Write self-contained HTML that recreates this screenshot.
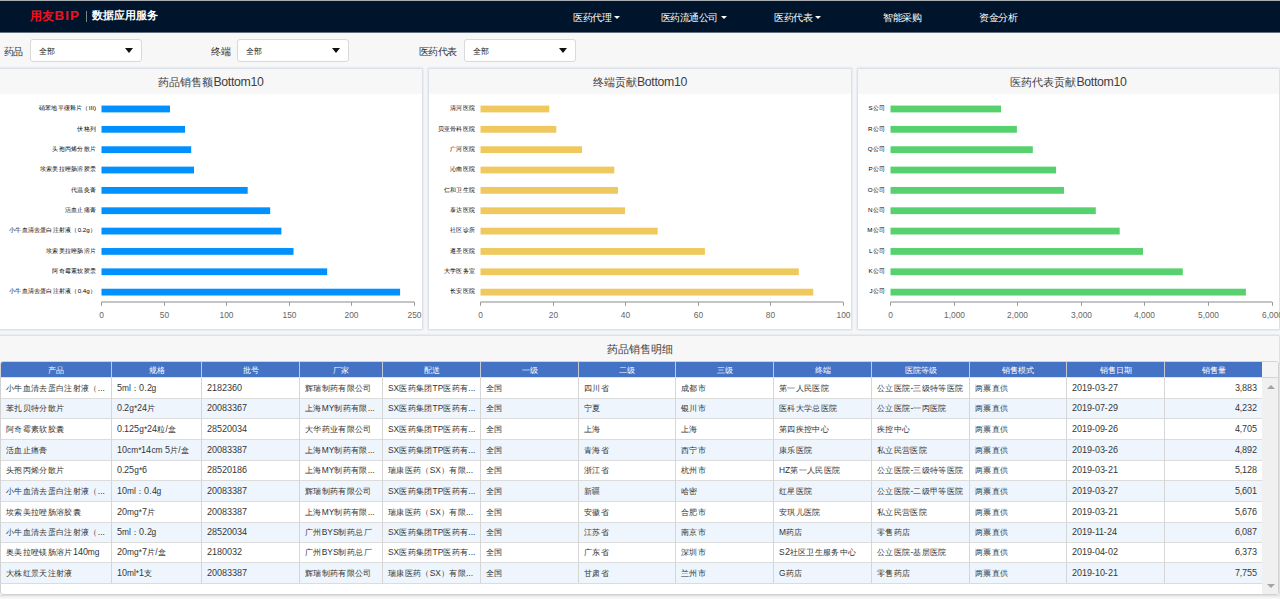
<!DOCTYPE html>
<html><head><meta charset="utf-8"><style>
@font-face{font-family:"LSx";src:local("Liberation Sans");size-adjust:107%;unicode-range:U+0030-0039}
*{margin:0;padding:0;box-sizing:border-box}
html,body{width:1280px;height:599px;overflow:hidden;background:#f7f7f7;font-family:"Liberation Sans",sans-serif;color:#333}
.top{position:absolute;left:0;top:0;width:1280px;height:32px;background:#00152b;border-top:1px solid #a8acb0}
.logo{position:absolute;left:30px;top:5px;height:20px;line-height:20px;color:#f0101e;font-size:12.4px;font-weight:bold;letter-spacing:0;white-space:nowrap} .logo b{font-size:13.3px;letter-spacing:1.1px;margin-left:0.5px}
.sep{position:absolute;left:86px;top:10px;width:1px;height:11px;background:#7d828c}
.app{position:absolute;left:91.5px;top:6.6px;color:#fff;font-size:11.2px;font-weight:bold}
.nav{position:absolute;top:9.7px;color:#fff;font-size:10px;letter-spacing:-0.43px;white-space:nowrap}
.caret{display:inline-block;width:0;height:0;border-left:3px solid transparent;border-right:3px solid transparent;border-top:3px solid #fff;vertical-align:middle;margin-left:3px;margin-top:-2px}
.flab{position:absolute;top:45.3px;font-size:10px;letter-spacing:-0.43px;color:#333}
.sel{position:absolute;top:39px;width:111.5px;height:22.5px;background:#fff;border:1px solid #d9d9d9;border-radius:3px}
.sel span{position:absolute;left:8px;top:5.5px;font-size:8.4px;color:#222}
.sel i{position:absolute;right:8px;top:8px;width:0;height:0;border-left:4px solid transparent;border-right:4px solid transparent;border-top:5.5px solid #111}
.panel{position:absolute;background:#fff;box-shadow:0 0 2px 1px #cdd6e3}
.ptitle{position:absolute;left:0;top:0;width:100%;height:26px;background:#f7f7f7;text-align:center;font-size:11.3px;line-height:28px;color:#404040}
.bt{font-size:12.3px;letter-spacing:-0.3px}
.yl{position:absolute;width:200px;height:10px;line-height:10px;text-align:right;font-size:7px;color:#000;white-space:nowrap;transform:scale(0.89);transform-origin:100% 50%}
.xl{font-size:8.4px;fill:#666}
.th{position:absolute;color:#fff;font-size:8.4px;text-align:center}
.c{letter-spacing:0.35px}
.td{position:absolute;font-family:"LSx","Liberation Sans",sans-serif;font-size:8.4px;color:#333;white-space:nowrap;overflow:hidden}
</style></head><body>
<div style="position:absolute;left:0;top:32px;width:1280px;height:1px;background:#626f7c"></div>
<div class="top">
 <div class="logo">用友<b>BIP</b></div><div class="sep"></div><div class="app">数据应用服务</div>
 <div class="nav" style="left:573px">医药代理<i class="caret"></i></div>
 <div class="nav" style="left:660.5px">医药流通公司<i class="caret"></i></div>
 <div class="nav" style="left:774px">医药代表<i class="caret"></i></div>
 <div class="nav" style="left:883px">智能采购</div>
 <div class="nav" style="left:979px">资金分析</div>
</div>
<div class="flab" style="left:3.5px">药品</div><div class="sel" style="left:30px"><span>全部</span><i></i></div>
<div class="flab" style="left:211px">终端</div><div class="sel" style="left:237px;width:112px"><span>全部</span><i></i></div>
<div class="flab" style="left:418.5px">医药代表</div><div class="sel" style="left:464px"><span>全部</span><i></i></div>
<div class="panel" style="left:0px;top:69px;width:422px;height:260px"><div class="ptitle" style="height:25px;line-height:26px">药品销售额<span class="bt">Bottom10</span></div><div class="pbody"></div><svg width="422" height="235" style="position:absolute;left:0;top:25px;overflow:visible"><rect x="101.5" y="11.58" width="68.50" height="6.8" fill="#0091ff"/><rect x="101.5" y="31.93" width="83.50" height="6.8" fill="#0091ff"/><rect x="101.5" y="52.28" width="89.70" height="6.8" fill="#0091ff"/><rect x="101.5" y="72.63" width="92.50" height="6.8" fill="#0091ff"/><rect x="101.5" y="92.97" width="146.20" height="6.8" fill="#0091ff"/><rect x="101.5" y="113.33" width="168.70" height="6.8" fill="#0091ff"/><rect x="101.5" y="133.68" width="179.90" height="6.8" fill="#0091ff"/><rect x="101.5" y="154.03" width="192.00" height="6.8" fill="#0091ff"/><rect x="101.5" y="174.38" width="225.70" height="6.8" fill="#0091ff"/><rect x="101.5" y="194.73" width="298.60" height="6.8" fill="#0091ff"/><path d="M101.5 208H414.3" stroke="#8c8c8c" stroke-width="1.2" fill="none"/><path d="M101.50 208v3.8" stroke="#999" stroke-width="1" fill="none"/><text x="101.50" y="223.5" text-anchor="middle" class="xl">0</text><path d="M164.50 208v3.8" stroke="#999" stroke-width="1" fill="none"/><text x="164.50" y="223.5" text-anchor="middle" class="xl">50</text><path d="M226.50 208v3.8" stroke="#999" stroke-width="1" fill="none"/><text x="226.50" y="223.5" text-anchor="middle" class="xl">100</text><path d="M289.50 208v3.8" stroke="#999" stroke-width="1" fill="none"/><text x="289.50" y="223.5" text-anchor="middle" class="xl">150</text><path d="M351.50 208v3.8" stroke="#999" stroke-width="1" fill="none"/><text x="351.50" y="223.5" text-anchor="middle" class="xl">200</text><path d="M414.50 208v3.8" stroke="#999" stroke-width="1" fill="none"/><text x="414.50" y="223.5" text-anchor="middle" class="xl">250</text></svg><div class="yl" style="left:-104.00px;top:34.27px">硝苯地平缓释片（III)</div><div class="yl" style="left:-104.00px;top:54.63px">伏格列</div><div class="yl" style="left:-104.00px;top:74.97px">头孢丙烯分散片</div><div class="yl" style="left:-104.00px;top:95.33px">埃索美拉唑肠溶胶囊</div><div class="yl" style="left:-104.00px;top:115.67px">代温灸膏</div><div class="yl" style="left:-104.00px;top:136.03px">活血止痛膏</div><div class="yl" style="left:-104.00px;top:156.38px">小牛血清去蛋白注射液（0.2g）</div><div class="yl" style="left:-104.00px;top:176.72px">埃索美拉唑肠溶片</div><div class="yl" style="left:-104.00px;top:197.08px">阿奇霉素软胶囊</div><div class="yl" style="left:-104.00px;top:217.43px">小牛血清去蛋白注射液（0.4g）</div></div><div class="panel" style="left:429px;top:69px;width:422px;height:260px"><div class="ptitle" style="height:25px;line-height:26px">终端贡献<span class="bt">Bottom10</span></div><div class="pbody"></div><svg width="422" height="235" style="position:absolute;left:0;top:25px;overflow:visible"><rect x="51.5" y="11.58" width="68.80" height="6.8" fill="#efc95e"/><rect x="51.5" y="31.93" width="75.80" height="6.8" fill="#efc95e"/><rect x="51.5" y="52.28" width="101.50" height="6.8" fill="#efc95e"/><rect x="51.5" y="72.63" width="133.80" height="6.8" fill="#efc95e"/><rect x="51.5" y="92.97" width="137.50" height="6.8" fill="#efc95e"/><rect x="51.5" y="113.33" width="144.50" height="6.8" fill="#efc95e"/><rect x="51.5" y="133.68" width="177.20" height="6.8" fill="#efc95e"/><rect x="51.5" y="154.03" width="224.40" height="6.8" fill="#efc95e"/><rect x="51.5" y="174.38" width="318.30" height="6.8" fill="#efc95e"/><rect x="51.5" y="194.73" width="332.80" height="6.8" fill="#efc95e"/><path d="M51.5 208H414" stroke="#8c8c8c" stroke-width="1.2" fill="none"/><path d="M51.50 208v3.8" stroke="#999" stroke-width="1" fill="none"/><text x="51.50" y="223.5" text-anchor="middle" class="xl">0</text><path d="M124.50 208v3.8" stroke="#999" stroke-width="1" fill="none"/><text x="124.50" y="223.5" text-anchor="middle" class="xl">20</text><path d="M196.50 208v3.8" stroke="#999" stroke-width="1" fill="none"/><text x="196.50" y="223.5" text-anchor="middle" class="xl">40</text><path d="M269.50 208v3.8" stroke="#999" stroke-width="1" fill="none"/><text x="269.50" y="223.5" text-anchor="middle" class="xl">60</text><path d="M341.50 208v3.8" stroke="#999" stroke-width="1" fill="none"/><text x="341.50" y="223.5" text-anchor="middle" class="xl">80</text><path d="M414.50 208v3.8" stroke="#999" stroke-width="1" fill="none"/><text x="414.50" y="223.5" text-anchor="middle" class="xl">100</text></svg><div class="yl" style="left:-154.00px;top:34.27px">清河医院</div><div class="yl" style="left:-154.00px;top:54.63px">贝亚骨科医院</div><div class="yl" style="left:-154.00px;top:74.97px">广河医院</div><div class="yl" style="left:-154.00px;top:95.33px">沁南医院</div><div class="yl" style="left:-154.00px;top:115.67px">仁和卫生院</div><div class="yl" style="left:-154.00px;top:136.03px">泰达医院</div><div class="yl" style="left:-154.00px;top:156.38px">社区诊所</div><div class="yl" style="left:-154.00px;top:176.72px">遵圣医院</div><div class="yl" style="left:-154.00px;top:197.08px">大学医务室</div><div class="yl" style="left:-154.00px;top:217.43px">长安医院</div></div><div class="panel" style="left:858px;top:69px;width:421px;height:260px"><div class="ptitle" style="height:25px;line-height:26px">医药代表贡献<span class="bt">Bottom10</span></div><div class="pbody"></div><svg width="422" height="235" style="position:absolute;left:0;top:25px;overflow:visible"><rect x="32.5" y="11.58" width="110.50" height="6.8" fill="#57d06e"/><rect x="32.5" y="31.93" width="126.40" height="6.8" fill="#57d06e"/><rect x="32.5" y="52.28" width="142.30" height="6.8" fill="#57d06e"/><rect x="32.5" y="72.63" width="165.60" height="6.8" fill="#57d06e"/><rect x="32.5" y="92.97" width="173.50" height="6.8" fill="#57d06e"/><rect x="32.5" y="113.33" width="205.30" height="6.8" fill="#57d06e"/><rect x="32.5" y="133.68" width="229.20" height="6.8" fill="#57d06e"/><rect x="32.5" y="154.03" width="252.50" height="6.8" fill="#57d06e"/><rect x="32.5" y="174.38" width="292.30" height="6.8" fill="#57d06e"/><rect x="32.5" y="194.73" width="355.40" height="6.8" fill="#57d06e"/><path d="M32.5 208H414" stroke="#8c8c8c" stroke-width="1.2" fill="none"/><path d="M32.50 208v3.8" stroke="#999" stroke-width="1" fill="none"/><text x="32.50" y="223.5" text-anchor="middle" class="xl">0</text><path d="M96.50 208v3.8" stroke="#999" stroke-width="1" fill="none"/><text x="96.50" y="223.5" text-anchor="middle" class="xl">1,000</text><path d="M159.50 208v3.8" stroke="#999" stroke-width="1" fill="none"/><text x="159.50" y="223.5" text-anchor="middle" class="xl">2,000</text><path d="M223.50 208v3.8" stroke="#999" stroke-width="1" fill="none"/><text x="223.50" y="223.5" text-anchor="middle" class="xl">3,000</text><path d="M286.50 208v3.8" stroke="#999" stroke-width="1" fill="none"/><text x="286.50" y="223.5" text-anchor="middle" class="xl">4,000</text><path d="M350.50 208v3.8" stroke="#999" stroke-width="1" fill="none"/><text x="350.50" y="223.5" text-anchor="middle" class="xl">5,000</text><path d="M414.50 208v3.8" stroke="#999" stroke-width="1" fill="none"/><text x="414.50" y="223.5" text-anchor="middle" class="xl">6,000</text></svg><div class="yl" style="left:-173.00px;top:34.27px">S公司</div><div class="yl" style="left:-173.00px;top:54.63px">R公司</div><div class="yl" style="left:-173.00px;top:74.97px">Q公司</div><div class="yl" style="left:-173.00px;top:95.33px">P公司</div><div class="yl" style="left:-173.00px;top:115.67px">O公司</div><div class="yl" style="left:-173.00px;top:136.03px">N公司</div><div class="yl" style="left:-173.00px;top:156.38px">M公司</div><div class="yl" style="left:-173.00px;top:176.72px">L公司</div><div class="yl" style="left:-173.00px;top:197.08px">K公司</div><div class="yl" style="left:-173.00px;top:217.43px">J公司</div></div>
<div class="panel" style="left:0;top:336px;width:1279px;height:259px;background:#f7f7f7">
 <div class="ptitle" style="background:transparent;line-height:26.5px">药品销售明细</div>
</div>
<div style="position:absolute;left:0;top:361px;width:1279px;height:234px;border:1px solid #d2d2d2;border-radius:3px;overflow:hidden;background:#fff"><div style="position:absolute;left:-1px;top:-362px;width:1280px;height:600px">
<div style="position:absolute;left:1px;top:362px;width:1261px;height:15px;background:#4472c4"></div><div class="th" style="left:1px;top:362px;width:110px;height:15px;line-height:16.4px">产品</div><div class="th" style="left:112px;top:362px;width:89px;height:15px;line-height:16.4px">规格</div><div class="th" style="left:202px;top:362px;width:97px;height:15px;line-height:16.4px">批号</div><div class="th" style="left:300px;top:362px;width:82px;height:15px;line-height:16.4px">厂家</div><div class="th" style="left:383px;top:362px;width:97px;height:15px;line-height:16.4px">配送</div><div class="th" style="left:481px;top:362px;width:97px;height:15px;line-height:16.4px">一级</div><div class="th" style="left:579px;top:362px;width:96px;height:15px;line-height:16.4px">二级</div><div class="th" style="left:676px;top:362px;width:97px;height:15px;line-height:16.4px">三级</div><div class="th" style="left:774px;top:362px;width:97px;height:15px;line-height:16.4px">终端</div><div class="th" style="left:872px;top:362px;width:97px;height:15px;line-height:16.4px">医院等级</div><div class="th" style="left:970px;top:362px;width:96px;height:15px;line-height:16.4px">销售模式</div><div class="th" style="left:1067px;top:362px;width:97px;height:15px;line-height:16.4px">销售日期</div><div class="th" style="left:1165px;top:362px;width:97px;height:15px;line-height:16.4px">销售量</div><div style="position:absolute;left:1px;top:378px;width:1261px;height:20px;background:#ffffff"></div><div style="position:absolute;left:1px;top:398px;width:1261px;height:1px;background:#dcdcdc"></div><div class="td" style="left:1px;top:378.00px;width:110px;height:20px;line-height:20.60px;text-align:left;padding-left:5px"><span class="c">小牛血清去蛋白注射液（</span>...</div><div class="td" style="left:112px;top:378.00px;width:89px;height:20px;line-height:20.60px;text-align:left;padding-left:5px">5ml<span class="c">：</span>0.2g</div><div class="td" style="left:202px;top:378.00px;width:97px;height:20px;line-height:20.60px;text-align:left;padding-left:5px">2182360</div><div class="td" style="left:300px;top:378.00px;width:82px;height:20px;line-height:20.60px;text-align:left;padding-left:5px"><span class="c">辉瑞制药有限公司</span></div><div class="td" style="left:383px;top:378.00px;width:97px;height:20px;line-height:20.60px;text-align:left;padding-left:5px">SX<span class="c">医药集团</span>TP<span class="c">医药有</span>...</div><div class="td" style="left:481px;top:378.00px;width:97px;height:20px;line-height:20.60px;text-align:left;padding-left:5px"><span class="c">全国</span></div><div class="td" style="left:579px;top:378.00px;width:96px;height:20px;line-height:20.60px;text-align:left;padding-left:5px"><span class="c">四川省</span></div><div class="td" style="left:676px;top:378.00px;width:97px;height:20px;line-height:20.60px;text-align:left;padding-left:5px"><span class="c">成都市</span></div><div class="td" style="left:774px;top:378.00px;width:97px;height:20px;line-height:20.60px;text-align:left;padding-left:5px"><span class="c">第一人民医院</span></div><div class="td" style="left:872px;top:378.00px;width:97px;height:20px;line-height:20.60px;text-align:left;padding-left:5px"><span class="c">公立医院</span>-<span class="c">三级特等医院</span></div><div class="td" style="left:970px;top:378.00px;width:96px;height:20px;line-height:20.60px;text-align:left;padding-left:5px"><span class="c">两票直供</span></div><div class="td" style="left:1067px;top:378.00px;width:97px;height:20px;line-height:20.60px;text-align:left;padding-left:5px">2019-03-27</div><div class="td" style="left:1165px;top:378.00px;width:97px;height:20px;line-height:20.60px;text-align:right;padding-right:5px">3,883</div><div style="position:absolute;left:1px;top:399px;width:1261px;height:19px;background:#eef5fd"></div><div style="position:absolute;left:1px;top:418px;width:1261px;height:1px;background:#dcdcdc"></div><div class="td" style="left:1px;top:399.00px;width:110px;height:19px;line-height:19.60px;text-align:left;padding-left:5px"><span class="c">苯扎贝特分散片</span></div><div class="td" style="left:112px;top:399.00px;width:89px;height:19px;line-height:19.60px;text-align:left;padding-left:5px">0.2g*24<span class="c">片</span></div><div class="td" style="left:202px;top:399.00px;width:97px;height:19px;line-height:19.60px;text-align:left;padding-left:5px">20083367</div><div class="td" style="left:300px;top:399.00px;width:82px;height:19px;line-height:19.60px;text-align:left;padding-left:5px"><span class="c">上海</span>MY<span class="c">制药有限</span>...</div><div class="td" style="left:383px;top:399.00px;width:97px;height:19px;line-height:19.60px;text-align:left;padding-left:5px">SX<span class="c">医药集团</span>TP<span class="c">医药有</span>...</div><div class="td" style="left:481px;top:399.00px;width:97px;height:19px;line-height:19.60px;text-align:left;padding-left:5px"><span class="c">全国</span></div><div class="td" style="left:579px;top:399.00px;width:96px;height:19px;line-height:19.60px;text-align:left;padding-left:5px"><span class="c">宁夏</span></div><div class="td" style="left:676px;top:399.00px;width:97px;height:19px;line-height:19.60px;text-align:left;padding-left:5px"><span class="c">银川市</span></div><div class="td" style="left:774px;top:399.00px;width:97px;height:19px;line-height:19.60px;text-align:left;padding-left:5px"><span class="c">医科大学总医院</span></div><div class="td" style="left:872px;top:399.00px;width:97px;height:19px;line-height:19.60px;text-align:left;padding-left:5px"><span class="c">公立医院</span>-<span class="c">一丙医院</span></div><div class="td" style="left:970px;top:399.00px;width:96px;height:19px;line-height:19.60px;text-align:left;padding-left:5px"><span class="c">两票直供</span></div><div class="td" style="left:1067px;top:399.00px;width:97px;height:19px;line-height:19.60px;text-align:left;padding-left:5px">2019-07-29</div><div class="td" style="left:1165px;top:399.00px;width:97px;height:19px;line-height:19.60px;text-align:right;padding-right:5px">4,232</div><div style="position:absolute;left:1px;top:419px;width:1261px;height:20px;background:#ffffff"></div><div style="position:absolute;left:1px;top:439px;width:1261px;height:1px;background:#dcdcdc"></div><div class="td" style="left:1px;top:419.00px;width:110px;height:20px;line-height:20.60px;text-align:left;padding-left:5px"><span class="c">阿奇霉素软胶囊</span></div><div class="td" style="left:112px;top:419.00px;width:89px;height:20px;line-height:20.60px;text-align:left;padding-left:5px">0.125g*24<span class="c">粒</span>/<span class="c">盒</span></div><div class="td" style="left:202px;top:419.00px;width:97px;height:20px;line-height:20.60px;text-align:left;padding-left:5px">28520034</div><div class="td" style="left:300px;top:419.00px;width:82px;height:20px;line-height:20.60px;text-align:left;padding-left:5px"><span class="c">大华药业有限公司</span></div><div class="td" style="left:383px;top:419.00px;width:97px;height:20px;line-height:20.60px;text-align:left;padding-left:5px">SX<span class="c">医药集团</span>TP<span class="c">医药有</span>...</div><div class="td" style="left:481px;top:419.00px;width:97px;height:20px;line-height:20.60px;text-align:left;padding-left:5px"><span class="c">全国</span></div><div class="td" style="left:579px;top:419.00px;width:96px;height:20px;line-height:20.60px;text-align:left;padding-left:5px"><span class="c">上海</span></div><div class="td" style="left:676px;top:419.00px;width:97px;height:20px;line-height:20.60px;text-align:left;padding-left:5px"><span class="c">上海</span></div><div class="td" style="left:774px;top:419.00px;width:97px;height:20px;line-height:20.60px;text-align:left;padding-left:5px"><span class="c">第四疾控中心</span></div><div class="td" style="left:872px;top:419.00px;width:97px;height:20px;line-height:20.60px;text-align:left;padding-left:5px"><span class="c">疾控中心</span></div><div class="td" style="left:970px;top:419.00px;width:96px;height:20px;line-height:20.60px;text-align:left;padding-left:5px"><span class="c">两票直供</span></div><div class="td" style="left:1067px;top:419.00px;width:97px;height:20px;line-height:20.60px;text-align:left;padding-left:5px">2019-09-26</div><div class="td" style="left:1165px;top:419.00px;width:97px;height:20px;line-height:20.60px;text-align:right;padding-right:5px">4,705</div><div style="position:absolute;left:1px;top:440px;width:1261px;height:20px;background:#eef5fd"></div><div style="position:absolute;left:1px;top:460px;width:1261px;height:1px;background:#dcdcdc"></div><div class="td" style="left:1px;top:440.00px;width:110px;height:20px;line-height:20.60px;text-align:left;padding-left:5px"><span class="c">活血止痛膏</span></div><div class="td" style="left:112px;top:440.00px;width:89px;height:20px;line-height:20.60px;text-align:left;padding-left:5px">10cm*14cm 5<span class="c">片</span>/<span class="c">盒</span></div><div class="td" style="left:202px;top:440.00px;width:97px;height:20px;line-height:20.60px;text-align:left;padding-left:5px">20083387</div><div class="td" style="left:300px;top:440.00px;width:82px;height:20px;line-height:20.60px;text-align:left;padding-left:5px"><span class="c">上海</span>MY<span class="c">制药有限</span>...</div><div class="td" style="left:383px;top:440.00px;width:97px;height:20px;line-height:20.60px;text-align:left;padding-left:5px">SX<span class="c">医药集团</span>TP<span class="c">医药有</span>...</div><div class="td" style="left:481px;top:440.00px;width:97px;height:20px;line-height:20.60px;text-align:left;padding-left:5px"><span class="c">全国</span></div><div class="td" style="left:579px;top:440.00px;width:96px;height:20px;line-height:20.60px;text-align:left;padding-left:5px"><span class="c">青海省</span></div><div class="td" style="left:676px;top:440.00px;width:97px;height:20px;line-height:20.60px;text-align:left;padding-left:5px"><span class="c">西宁市</span></div><div class="td" style="left:774px;top:440.00px;width:97px;height:20px;line-height:20.60px;text-align:left;padding-left:5px"><span class="c">康乐医院</span></div><div class="td" style="left:872px;top:440.00px;width:97px;height:20px;line-height:20.60px;text-align:left;padding-left:5px"><span class="c">私立民营医院</span></div><div class="td" style="left:970px;top:440.00px;width:96px;height:20px;line-height:20.60px;text-align:left;padding-left:5px"><span class="c">两票直供</span></div><div class="td" style="left:1067px;top:440.00px;width:97px;height:20px;line-height:20.60px;text-align:left;padding-left:5px">2019-03-26</div><div class="td" style="left:1165px;top:440.00px;width:97px;height:20px;line-height:20.60px;text-align:right;padding-right:5px">4,892</div><div style="position:absolute;left:1px;top:461px;width:1261px;height:19px;background:#ffffff"></div><div style="position:absolute;left:1px;top:480px;width:1261px;height:1px;background:#dcdcdc"></div><div class="td" style="left:1px;top:461.00px;width:110px;height:19px;line-height:19.60px;text-align:left;padding-left:5px"><span class="c">头孢丙烯分散片</span></div><div class="td" style="left:112px;top:461.00px;width:89px;height:19px;line-height:19.60px;text-align:left;padding-left:5px">0.25g*6</div><div class="td" style="left:202px;top:461.00px;width:97px;height:19px;line-height:19.60px;text-align:left;padding-left:5px">28520186</div><div class="td" style="left:300px;top:461.00px;width:82px;height:19px;line-height:19.60px;text-align:left;padding-left:5px"><span class="c">上海</span>MY<span class="c">制药有限</span>...</div><div class="td" style="left:383px;top:461.00px;width:97px;height:19px;line-height:19.60px;text-align:left;padding-left:5px"><span class="c">瑞康医药（</span>SX<span class="c">）有限</span>...</div><div class="td" style="left:481px;top:461.00px;width:97px;height:19px;line-height:19.60px;text-align:left;padding-left:5px"><span class="c">全国</span></div><div class="td" style="left:579px;top:461.00px;width:96px;height:19px;line-height:19.60px;text-align:left;padding-left:5px"><span class="c">浙江省</span></div><div class="td" style="left:676px;top:461.00px;width:97px;height:19px;line-height:19.60px;text-align:left;padding-left:5px"><span class="c">杭州市</span></div><div class="td" style="left:774px;top:461.00px;width:97px;height:19px;line-height:19.60px;text-align:left;padding-left:5px">HZ<span class="c">第一人民医院</span></div><div class="td" style="left:872px;top:461.00px;width:97px;height:19px;line-height:19.60px;text-align:left;padding-left:5px"><span class="c">公立医院</span>-<span class="c">三级特等医院</span></div><div class="td" style="left:970px;top:461.00px;width:96px;height:19px;line-height:19.60px;text-align:left;padding-left:5px"><span class="c">两票直供</span></div><div class="td" style="left:1067px;top:461.00px;width:97px;height:19px;line-height:19.60px;text-align:left;padding-left:5px">2019-03-21</div><div class="td" style="left:1165px;top:461.00px;width:97px;height:19px;line-height:19.60px;text-align:right;padding-right:5px">5,128</div><div style="position:absolute;left:1px;top:481px;width:1261px;height:20px;background:#eef5fd"></div><div style="position:absolute;left:1px;top:501px;width:1261px;height:1px;background:#dcdcdc"></div><div class="td" style="left:1px;top:481.00px;width:110px;height:20px;line-height:20.60px;text-align:left;padding-left:5px"><span class="c">小牛血清去蛋白注射液（</span>...</div><div class="td" style="left:112px;top:481.00px;width:89px;height:20px;line-height:20.60px;text-align:left;padding-left:5px">10ml<span class="c">：</span>0.4g</div><div class="td" style="left:202px;top:481.00px;width:97px;height:20px;line-height:20.60px;text-align:left;padding-left:5px">20083387</div><div class="td" style="left:300px;top:481.00px;width:82px;height:20px;line-height:20.60px;text-align:left;padding-left:5px"><span class="c">辉瑞制药有限公司</span></div><div class="td" style="left:383px;top:481.00px;width:97px;height:20px;line-height:20.60px;text-align:left;padding-left:5px">SX<span class="c">医药集团</span>TP<span class="c">医药有</span>...</div><div class="td" style="left:481px;top:481.00px;width:97px;height:20px;line-height:20.60px;text-align:left;padding-left:5px"><span class="c">全国</span></div><div class="td" style="left:579px;top:481.00px;width:96px;height:20px;line-height:20.60px;text-align:left;padding-left:5px"><span class="c">新疆</span></div><div class="td" style="left:676px;top:481.00px;width:97px;height:20px;line-height:20.60px;text-align:left;padding-left:5px"><span class="c">哈密</span></div><div class="td" style="left:774px;top:481.00px;width:97px;height:20px;line-height:20.60px;text-align:left;padding-left:5px"><span class="c">红星医院</span></div><div class="td" style="left:872px;top:481.00px;width:97px;height:20px;line-height:20.60px;text-align:left;padding-left:5px"><span class="c">公立医院</span>-<span class="c">二级甲等医院</span></div><div class="td" style="left:970px;top:481.00px;width:96px;height:20px;line-height:20.60px;text-align:left;padding-left:5px"><span class="c">两票直供</span></div><div class="td" style="left:1067px;top:481.00px;width:97px;height:20px;line-height:20.60px;text-align:left;padding-left:5px">2019-03-27</div><div class="td" style="left:1165px;top:481.00px;width:97px;height:20px;line-height:20.60px;text-align:right;padding-right:5px">5,601</div><div style="position:absolute;left:1px;top:502px;width:1261px;height:20px;background:#ffffff"></div><div style="position:absolute;left:1px;top:522px;width:1261px;height:1px;background:#dcdcdc"></div><div class="td" style="left:1px;top:502.00px;width:110px;height:20px;line-height:20.60px;text-align:left;padding-left:5px"><span class="c">埃索美拉唑肠溶胶囊</span></div><div class="td" style="left:112px;top:502.00px;width:89px;height:20px;line-height:20.60px;text-align:left;padding-left:5px">20mg*7<span class="c">片</span></div><div class="td" style="left:202px;top:502.00px;width:97px;height:20px;line-height:20.60px;text-align:left;padding-left:5px">20083387</div><div class="td" style="left:300px;top:502.00px;width:82px;height:20px;line-height:20.60px;text-align:left;padding-left:5px"><span class="c">上海</span>MY<span class="c">制药有限</span>...</div><div class="td" style="left:383px;top:502.00px;width:97px;height:20px;line-height:20.60px;text-align:left;padding-left:5px"><span class="c">瑞康医药（</span>SX<span class="c">）有限</span>...</div><div class="td" style="left:481px;top:502.00px;width:97px;height:20px;line-height:20.60px;text-align:left;padding-left:5px"><span class="c">全国</span></div><div class="td" style="left:579px;top:502.00px;width:96px;height:20px;line-height:20.60px;text-align:left;padding-left:5px"><span class="c">安徽省</span></div><div class="td" style="left:676px;top:502.00px;width:97px;height:20px;line-height:20.60px;text-align:left;padding-left:5px"><span class="c">合肥市</span></div><div class="td" style="left:774px;top:502.00px;width:97px;height:20px;line-height:20.60px;text-align:left;padding-left:5px"><span class="c">安琪儿医院</span></div><div class="td" style="left:872px;top:502.00px;width:97px;height:20px;line-height:20.60px;text-align:left;padding-left:5px"><span class="c">私立民营医院</span></div><div class="td" style="left:970px;top:502.00px;width:96px;height:20px;line-height:20.60px;text-align:left;padding-left:5px"><span class="c">两票直供</span></div><div class="td" style="left:1067px;top:502.00px;width:97px;height:20px;line-height:20.60px;text-align:left;padding-left:5px">2019-03-21</div><div class="td" style="left:1165px;top:502.00px;width:97px;height:20px;line-height:20.60px;text-align:right;padding-right:5px">5,676</div><div style="position:absolute;left:1px;top:523px;width:1261px;height:19px;background:#eef5fd"></div><div style="position:absolute;left:1px;top:542px;width:1261px;height:1px;background:#dcdcdc"></div><div class="td" style="left:1px;top:523.00px;width:110px;height:19px;line-height:19.60px;text-align:left;padding-left:5px"><span class="c">小牛血清去蛋白注射液（</span>...</div><div class="td" style="left:112px;top:523.00px;width:89px;height:19px;line-height:19.60px;text-align:left;padding-left:5px">5ml<span class="c">：</span>0.2g</div><div class="td" style="left:202px;top:523.00px;width:97px;height:19px;line-height:19.60px;text-align:left;padding-left:5px">28520034</div><div class="td" style="left:300px;top:523.00px;width:82px;height:19px;line-height:19.60px;text-align:left;padding-left:5px"><span class="c">广州</span>BYS<span class="c">制药总厂</span></div><div class="td" style="left:383px;top:523.00px;width:97px;height:19px;line-height:19.60px;text-align:left;padding-left:5px">SX<span class="c">医药集团</span>TP<span class="c">医药有</span>...</div><div class="td" style="left:481px;top:523.00px;width:97px;height:19px;line-height:19.60px;text-align:left;padding-left:5px"><span class="c">全国</span></div><div class="td" style="left:579px;top:523.00px;width:96px;height:19px;line-height:19.60px;text-align:left;padding-left:5px"><span class="c">江苏省</span></div><div class="td" style="left:676px;top:523.00px;width:97px;height:19px;line-height:19.60px;text-align:left;padding-left:5px"><span class="c">南京市</span></div><div class="td" style="left:774px;top:523.00px;width:97px;height:19px;line-height:19.60px;text-align:left;padding-left:5px">M<span class="c">药店</span></div><div class="td" style="left:872px;top:523.00px;width:97px;height:19px;line-height:19.60px;text-align:left;padding-left:5px"><span class="c">零售药店</span></div><div class="td" style="left:970px;top:523.00px;width:96px;height:19px;line-height:19.60px;text-align:left;padding-left:5px"><span class="c">两票直供</span></div><div class="td" style="left:1067px;top:523.00px;width:97px;height:19px;line-height:19.60px;text-align:left;padding-left:5px">2019-11-24</div><div class="td" style="left:1165px;top:523.00px;width:97px;height:19px;line-height:19.60px;text-align:right;padding-right:5px">6,087</div><div style="position:absolute;left:1px;top:543px;width:1261px;height:19px;background:#ffffff"></div><div style="position:absolute;left:1px;top:562px;width:1261px;height:1px;background:#dcdcdc"></div><div class="td" style="left:1px;top:543.00px;width:110px;height:19px;line-height:19.60px;text-align:left;padding-left:5px"><span class="c">奥美拉唑镁肠溶片</span>140mg</div><div class="td" style="left:112px;top:543.00px;width:89px;height:19px;line-height:19.60px;text-align:left;padding-left:5px">20mg*7<span class="c">片</span>/<span class="c">盒</span></div><div class="td" style="left:202px;top:543.00px;width:97px;height:19px;line-height:19.60px;text-align:left;padding-left:5px">2180032</div><div class="td" style="left:300px;top:543.00px;width:82px;height:19px;line-height:19.60px;text-align:left;padding-left:5px"><span class="c">广州</span>BYS<span class="c">制药总厂</span></div><div class="td" style="left:383px;top:543.00px;width:97px;height:19px;line-height:19.60px;text-align:left;padding-left:5px">SX<span class="c">医药集团</span>TP<span class="c">医药有</span>...</div><div class="td" style="left:481px;top:543.00px;width:97px;height:19px;line-height:19.60px;text-align:left;padding-left:5px"><span class="c">全国</span></div><div class="td" style="left:579px;top:543.00px;width:96px;height:19px;line-height:19.60px;text-align:left;padding-left:5px"><span class="c">广东省</span></div><div class="td" style="left:676px;top:543.00px;width:97px;height:19px;line-height:19.60px;text-align:left;padding-left:5px"><span class="c">深圳市</span></div><div class="td" style="left:774px;top:543.00px;width:97px;height:19px;line-height:19.60px;text-align:left;padding-left:5px">S2<span class="c">社区卫生服务中心</span></div><div class="td" style="left:872px;top:543.00px;width:97px;height:19px;line-height:19.60px;text-align:left;padding-left:5px"><span class="c">公立医院</span>-<span class="c">基层医院</span></div><div class="td" style="left:970px;top:543.00px;width:96px;height:19px;line-height:19.60px;text-align:left;padding-left:5px"><span class="c">两票直供</span></div><div class="td" style="left:1067px;top:543.00px;width:97px;height:19px;line-height:19.60px;text-align:left;padding-left:5px">2019-04-02</div><div class="td" style="left:1165px;top:543.00px;width:97px;height:19px;line-height:19.60px;text-align:right;padding-right:5px">6,373</div><div style="position:absolute;left:1px;top:563px;width:1261px;height:20px;background:#eef5fd"></div><div style="position:absolute;left:1px;top:583px;width:1261px;height:1px;background:#dcdcdc"></div><div class="td" style="left:1px;top:563.00px;width:110px;height:20px;line-height:20.60px;text-align:left;padding-left:5px"><span class="c">大株红景天注射液</span></div><div class="td" style="left:112px;top:563.00px;width:89px;height:20px;line-height:20.60px;text-align:left;padding-left:5px">10ml*1<span class="c">支</span></div><div class="td" style="left:202px;top:563.00px;width:97px;height:20px;line-height:20.60px;text-align:left;padding-left:5px">20083387</div><div class="td" style="left:300px;top:563.00px;width:82px;height:20px;line-height:20.60px;text-align:left;padding-left:5px"><span class="c">辉瑞制药有限公司</span></div><div class="td" style="left:383px;top:563.00px;width:97px;height:20px;line-height:20.60px;text-align:left;padding-left:5px"><span class="c">瑞康医药（</span>SX<span class="c">）有限</span>...</div><div class="td" style="left:481px;top:563.00px;width:97px;height:20px;line-height:20.60px;text-align:left;padding-left:5px"><span class="c">全国</span></div><div class="td" style="left:579px;top:563.00px;width:96px;height:20px;line-height:20.60px;text-align:left;padding-left:5px"><span class="c">甘肃省</span></div><div class="td" style="left:676px;top:563.00px;width:97px;height:20px;line-height:20.60px;text-align:left;padding-left:5px"><span class="c">兰州市</span></div><div class="td" style="left:774px;top:563.00px;width:97px;height:20px;line-height:20.60px;text-align:left;padding-left:5px">G<span class="c">药店</span></div><div class="td" style="left:872px;top:563.00px;width:97px;height:20px;line-height:20.60px;text-align:left;padding-left:5px"><span class="c">零售药店</span></div><div class="td" style="left:970px;top:563.00px;width:96px;height:20px;line-height:20.60px;text-align:left;padding-left:5px"><span class="c">两票直供</span></div><div class="td" style="left:1067px;top:563.00px;width:97px;height:20px;line-height:20.60px;text-align:left;padding-left:5px">2019-10-21</div><div class="td" style="left:1165px;top:563.00px;width:97px;height:20px;line-height:20.60px;text-align:right;padding-right:5px">7,755</div><div style="position:absolute;left:111px;top:362px;width:1px;height:15px;background:#c3cad6"></div><div style="position:absolute;left:111px;top:377px;width:1px;height:206.00px;background:#d6d6d6"></div><div style="position:absolute;left:201px;top:362px;width:1px;height:15px;background:#c3cad6"></div><div style="position:absolute;left:201px;top:377px;width:1px;height:206.00px;background:#d6d6d6"></div><div style="position:absolute;left:299px;top:362px;width:1px;height:15px;background:#c3cad6"></div><div style="position:absolute;left:299px;top:377px;width:1px;height:206.00px;background:#d6d6d6"></div><div style="position:absolute;left:382px;top:362px;width:1px;height:15px;background:#c3cad6"></div><div style="position:absolute;left:382px;top:377px;width:1px;height:206.00px;background:#d6d6d6"></div><div style="position:absolute;left:480px;top:362px;width:1px;height:15px;background:#c3cad6"></div><div style="position:absolute;left:480px;top:377px;width:1px;height:206.00px;background:#d6d6d6"></div><div style="position:absolute;left:578px;top:362px;width:1px;height:15px;background:#c3cad6"></div><div style="position:absolute;left:578px;top:377px;width:1px;height:206.00px;background:#d6d6d6"></div><div style="position:absolute;left:675px;top:362px;width:1px;height:15px;background:#c3cad6"></div><div style="position:absolute;left:675px;top:377px;width:1px;height:206.00px;background:#d6d6d6"></div><div style="position:absolute;left:773px;top:362px;width:1px;height:15px;background:#c3cad6"></div><div style="position:absolute;left:773px;top:377px;width:1px;height:206.00px;background:#d6d6d6"></div><div style="position:absolute;left:871px;top:362px;width:1px;height:15px;background:#c3cad6"></div><div style="position:absolute;left:871px;top:377px;width:1px;height:206.00px;background:#d6d6d6"></div><div style="position:absolute;left:969px;top:362px;width:1px;height:15px;background:#c3cad6"></div><div style="position:absolute;left:969px;top:377px;width:1px;height:206.00px;background:#d6d6d6"></div><div style="position:absolute;left:1066px;top:362px;width:1px;height:15px;background:#c3cad6"></div><div style="position:absolute;left:1066px;top:377px;width:1px;height:206.00px;background:#d6d6d6"></div><div style="position:absolute;left:1164px;top:362px;width:1px;height:15px;background:#c3cad6"></div><div style="position:absolute;left:1164px;top:377px;width:1px;height:206.00px;background:#d6d6d6"></div><div style="position:absolute;left:1px;top:377px;width:1261px;height:1px;background:#e4e0d8"></div>
<div style="position:absolute;left:1262px;top:361px;width:16px;height:234px;background:#f0f0f0"></div>
<div style="position:absolute;left:1262px;top:362px;width:16px;height:15px;background:#f4f4f4"></div>
<div style="position:absolute;left:1262px;top:377px;width:16px;height:1px;background:#d4d4d4"></div>
<div style="position:absolute;left:1267px;top:385px;width:0;height:0;border-left:4px solid transparent;border-right:4px solid transparent;border-bottom:4px solid #a3a3a3"></div>
<div style="position:absolute;left:1267px;top:584px;width:0;height:0;border-left:4px solid transparent;border-right:4px solid transparent;border-top:4px solid #a3a3a3"></div>
</div></div>
</body></html>
